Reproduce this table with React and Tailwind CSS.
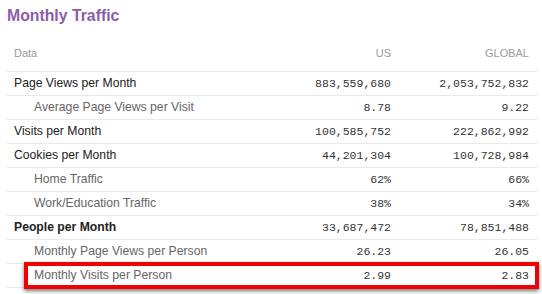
import React from 'react'

const rows = [
  { label: 'Page Views per Month', us: '883,559,680', global: '2,053,752,832' },
  { label: 'Average Page Views per Visit', us: '8.78', global: '9.22', sub: true },
  { label: 'Visits per Month', us: '100,585,752', global: '222,862,992' },
  { label: 'Cookies per Month', us: '44,201,304', global: '100,728,984' },
  { label: 'Home Traffic', us: '62%', global: '66%', sub: true },
  { label: 'Work/Education Traffic', us: '38%', global: '34%', sub: true },
  { label: 'People per Month', us: '33,687,472', global: '78,851,488', bold: true },
  { label: 'Monthly Page Views per Person', us: '26.23', global: '26.05', sub: true },
  { label: 'Monthly Visits per Person', us: '2.99', global: '2.83', sub: true, highlight: true },
]

export default function App() {
  return (
    <div className="w-[542px] h-[294px] bg-white overflow-hidden font-['Liberation_Sans',Arial,sans-serif]">
      <div className="h-[30px] pl-[7px] pt-[6px] text-[15.8px] leading-[19px] font-bold text-[#8d5ca8]">
        Monthly Traffic
      </div>
      <div className="ml-[7px] w-[530px]">
        <div className="grid grid-cols-[253px_139px_138px] h-[42px] pt-[16px] border-b border-[#e8e8e8] text-[11px] leading-[14px] text-[#9a9a9a]">
          <div className="pl-[7px]">Data</div>
          <div className="text-right pr-[8px]">US</div>
          <div className="text-right pr-[8px]">GLOBAL</div>
        </div>
        {rows.map((r) => (
          <div
            key={r.label}
            className="relative grid grid-cols-[253px_139px_138px] h-[24px] items-center border-b border-[#e8e8e8]"
          >
            <div
              className={
                r.sub
                  ? 'pl-[27px] text-[12.2px] text-[#666]'
                  : r.bold
                  ? 'pl-[7px] text-[12.2px] font-bold text-[#222]'
                  : 'pl-[7px] text-[12.2px] text-[#222]'
              }
            >
              {r.label}
            </div>
            <div className="text-right pr-[8px] font-['Liberation_Mono',monospace] text-[11.5px] text-[#333]">
              {r.us}
            </div>
            <div className="text-right pr-[8px] font-['Liberation_Mono',monospace] text-[11.5px] text-[#333]">
              {r.global}
            </div>
            {r.highlight && (
              <div className="absolute left-[17px] right-[-2px] top-[-2px] bottom-[-2px] border-[4px] border-[#f00000] shadow-[0_2px_4px_rgba(0,0,0,0.55)]" />
            )}
          </div>
        ))}
      </div>
    </div>
  )
}
